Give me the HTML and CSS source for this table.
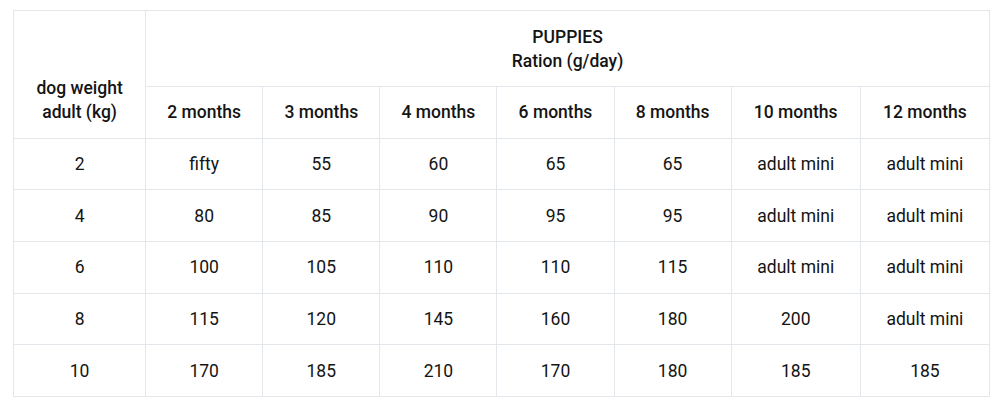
FILE: index.html
```html
<!DOCTYPE html>
<html>
<head>
<meta charset="utf-8">
<link rel="stylesheet" href="styles.css">
</head>
<body>
<table class="ration">
  <colgroup>
    <col class="c-first">
    <col class="c-mid"><col class="c-mid"><col class="c-mid"><col class="c-mid"><col class="c-mid">
    <col class="c-wide"><col class="c-wide">
  </colgroup>
  <thead>
    <tr class="r-top">
      <th rowspan="2" class="weight">dog weight<br>adult (kg)</th>
      <th colspan="7">PUPPIES<br>Ration (g/day)</th>
    </tr>
    <tr class="r-sub">
      <th>2 months</th><th>3 months</th><th>4 months</th><th>6 months</th><th>8 months</th><th>10 months</th><th>12 months</th>
    </tr>
  </thead>
  <tbody>
    <tr><td>2</td><td>fifty</td><td>55</td><td>60</td><td>65</td><td>65</td><td>adult mini</td><td>adult mini</td></tr>
    <tr><td>4</td><td>80</td><td>85</td><td>90</td><td>95</td><td>95</td><td>adult mini</td><td>adult mini</td></tr>
    <tr><td>6</td><td>100</td><td>105</td><td>110</td><td>110</td><td>115</td><td>adult mini</td><td>adult mini</td></tr>
    <tr><td>8</td><td>115</td><td>120</td><td>145</td><td>160</td><td>180</td><td>200</td><td>adult mini</td></tr>
    <tr><td>10</td><td>170</td><td>185</td><td>210</td><td>170</td><td>180</td><td>185</td><td>185</td></tr>
  </tbody>
</table>
</body>
</html>
```
FILE: styles.css
```css
html, body {
  margin: 0;
  padding: 0;
  background: #ffffff;
}
body {
  padding: 10px 0 0 13px;
  font-family: Roboto, "Liberation Sans", Arial, sans-serif;
  color: #141414;
}
.ration {
  border-collapse: collapse;
  table-layout: fixed;
  width: 977px;
  font-size: 17.5px;
  line-height: 24px;
}
.c-first { width: 132px; }
.c-mid { width: 117px; }
.c-wide { width: 129px; }
.ration th, .ration td {
  border: 1px solid #e3e6eb;
  text-align: center;
  vertical-align: middle;
  padding: 0 6px;
}
.ration th {
  font-weight: 500;
}
.ration .weight {
  padding-top: 51px;
}
.r-top th { height: 75px; }
.r-sub th { height: 50.7px; }
.ration td { height: 50.7px; }
```
